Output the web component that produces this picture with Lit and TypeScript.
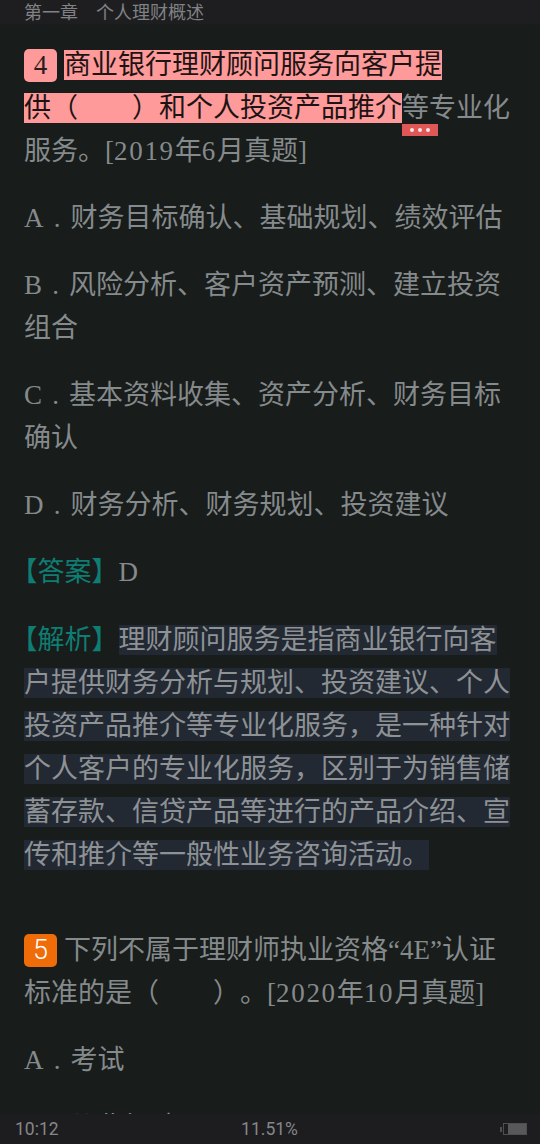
import { LitElement, html, css } from "lit";
import { customElement } from "lit/decorators.js";

@customElement("app-root")
export class AppRoot extends LitElement {
  static styles = css`
    :host {
      display: grid;
      grid-template-rows: 24px 1fr 30px;
      width: 540px;
      height: 1144px;
      overflow: hidden;
      background: #181c1a;
      color: #858a8c;
      font-family: "Liberation Serif", "Noto Sans CJK SC", serif;
      text-spacing-trim: space-all;
    }
    .top {
      background: #1e1e20;
      color: #808285;
      font: 18px/23px "Noto Sans CJK SC", sans-serif;
      padding-left: 24px;
      white-space: pre;
      overflow: hidden;
    }
    .content {
      overflow: hidden;
      padding: 19.5px 30px 0 24px;
      font-size: 27px;
      line-height: 43px;
    }
    p {
      margin: 0 0 24.2px;
    }
    .next {
      margin-top: 52px;
    }
    .badge {
      display: inline-block;
      width: 33px;
      height: 33px;
      line-height: 33px;
      border-radius: 5px;
      text-align: center;
      margin-right: 7px;
    }
    .b4 {
      background: #ff9a9a;
      color: #2a1c1c;
    }
    .b5 {
      background: #f06c08;
      color: #fff;
      font-family: "Roboto", sans-serif;
      font-weight: 300;
    }
    .red {
      background: #ff9a9a;
      color: #1c1414;
    }
    .dark {
      background: #222933;
      color: #8e9295;
    }
    .label {
      color: #0e7d73;
      font-feature-settings: "halt";
      margin-right: 13.5px;
    }
    .num {
      letter-spacing: 1.7px;
    }
    .dot {
      display: inline-block;
      width: 27px;
      text-align: center;
    }
    .anchor {
      position: relative;
    }
    .note {
      position: absolute;
      left: 0;
      top: 31.5px;
      width: 36px;
      height: 12px;
      background: #e05757;
      display: flex;
      align-items: center;
      justify-content: center;
      gap: 4px;
    }
    .note i {
      width: 4px;
      height: 4px;
      border-radius: 50%;
      background: #f6e6e6;
    }
    .bottom {
      background: #1d1d1f;
      color: #85878a;
      font: 17.5px/30px "Roboto", sans-serif;
      display: grid;
      grid-template-columns: 1fr auto 1fr;
      align-items: center;
      padding: 0 13px 0 15px;
    }
    .center {
      margin-left: -3px;
    }
    .battery {
      justify-self: end;
      display: flex;
      align-items: center;
      gap: 1px;
    }
    .nub {
      width: 2px;
      height: 5px;
      background: #4f4f51;
    }
    .cell {
      box-sizing: border-box;
      width: 24px;
      height: 12px;
      border: 1px solid #4f4f51;
      padding-left: 4px;
    }
    .cell b {
      display: block;
      height: 100%;
      background: #58585a;
    }
  `;

  render() {
    const dot = html`<span class="dot">.</span>`;
    return html`
      <div class="top">第一章　个人理财概述</div>
      <div class="content">
        <p>
          <span class="badge b4">4</span><span class="red">商业银行理财顾问服务向客户提</span><br /><span class="red">供（　　）和个人投资产品推介</span><span class="anchor">等<span class="note"><i></i><i></i><i></i></span></span>专业化服务。[<span class="num">2019</span>年<span class="num">6</span>月真题]
        </p>
        <p>A${dot}财务目标确认、基础规划、绩效评估</p>
        <p>B${dot}风险分析、客户资产预测、建立投资组合</p>
        <p>C${dot}基本资料收集、资产分析、财务目标确认</p>
        <p>D${dot}财务分析、财务规划、投资建议</p>
        <p><span class="label">【答案】</span>D</p>
        <p>
          <span class="label">【解析】</span><span class="dark">理财顾问服务是指商业银行向客户提供财务分析与规划、投资建议、个人投资产品推介等专业化服务，是一种针对个人客户的专业化服务，区别于为销售储蓄存款、信贷产品等进行的产品介绍、宣传和推介等一般性业务咨询活动。</span>
        </p>
        <p class="next">
          <span class="badge b5">5</span>下列不属于理财师执业资格“4E”认证标准的是（　　）。[<span class="num">2020</span>年<span class="num">10</span>月真题]
        </p>
        <p>A${dot}考试</p>
        <p>B${dot}从业经验</p>
      </div>
      <div class="bottom">
        <span>10:12</span>
        <span class="center">11.51%</span>
        <span class="battery"><span class="nub"></span><span class="cell"><b></b></span></span>
      </div>
    `;
  }
}
